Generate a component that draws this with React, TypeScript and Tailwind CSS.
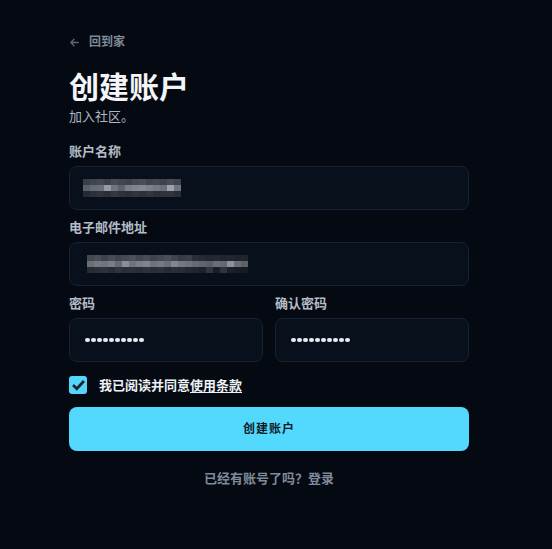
import React from "react";

const nameTop = [0x3a, 0x40, 0x44, 0x3c, 0x48, 0x42, 0x3e, 0x46, 0x4a, 0x40, 0x44, 0x3e, 0x48, 0x40];
const nameMid = [0x5a, 0x66, 0x6a, 0x96, 0x70, 0x5e, 0x7a, 0x80, 0x84, 0x7c, 0x74, 0x6c, 0x9e, 0x70];
const nameBot = [0x26, 0x2c, 0x30, 0x2a, 0x34, 0x2e, 0x2a, 0x30, 0x2c, 0x32, 0x2a, 0x2e, 0x30, 0x2a];

const mailTop = [0x44, 0x4a, 0x3e, 0x48, 0x40, 0x46, 0x4c, 0x42, 0x48, 0x3e, 0x44, 0x4a, 0x40, 0x36, 0x3a, 0x2a, 0x26, 0x22, 0x24, 0x20, 0x22, 0x1e, 0x20];
const mailMid = [0x6a, 0x74, 0x70, 0x7a, 0x66, 0x8a, 0x70, 0x7a, 0x80, 0x6e, 0x76, 0x6a, 0x82, 0x74, 0x6e, 0x66, 0x60, 0x5a, 0x6a, 0x64, 0x8e, 0x6a, 0x5c];
const mailBot = [0x26, 0x2a, 0x2e, 0x28, 0x30, 0x2a, 0x2c, 0x28, 0x2e, 0x2a, 0x2c, 0x26, 0x2a, 0x28, 0x24, 0x20, 0x1c, 0x30, 0x1a, 0x30, 0x1c, 0x18, 0x16];

const hex = (v: number) => {
  const b = Math.min(255, v + 12);
  const h = (n: number) => n.toString(16).padStart(2, "0");
  return `#${h(v)}${h(v + 4)}${h(b)}`;
};

function Mosaic({ rows, block = 7 }: { rows: number[][]; block?: number }) {
  const w = rows[0].length * block;
  const h = rows.length * 6;
  return (
    <svg width={w} height={h} viewBox={`0 0 ${w} ${h}`} className="block">
      {rows.map((row, r) =>
        row.map((v, c) => (
          <rect key={`${r}-${c}`} x={c * block} y={r * 6} width={block} height={6} fill={hex(v)} />
        ))
      )}
    </svg>
  );
}

function Label({ children }: { children: React.ReactNode }) {
  return <div className="text-[13px] font-bold leading-[18px] text-[#b4bcc8]">{children}</div>;
}

function Field({ children, className = "" }: { children?: React.ReactNode; className?: string }) {
  return (
    <div className={`flex h-[44px] items-center rounded-lg border border-[#172234] bg-[#08101b] ${className}`}>
      {children}
    </div>
  );
}

function Dots() {
  return (
    <div className="flex gap-[1.5px]">
      {Array.from({ length: 10 }).map((_, i) => (
        <span key={i} className="block h-[4.5px] w-[4.5px] rounded-full bg-[#e6e9ee]" />
      ))}
    </div>
  );
}

export default function App() {
  return (
    <div
      className="min-h-[549px] w-full bg-[#050a12] text-white"
      style={{ fontFamily: '"Inter", "Noto Sans CJK SC", sans-serif' }}
    >
      <div className="w-[400px] pl-[69px] pt-[33px] box-content">
        <div className="flex items-center gap-[9px] text-[12px] font-bold leading-[18px] text-[#7f8a9a]">
          <svg width="11" height="11" viewBox="0 0 12 12" fill="none" stroke="#5d6878" strokeWidth="1.4" strokeLinecap="round" strokeLinejoin="round">
            <path d="M10 6H2M5.5 2.5 2 6l3.5 3.5" />
          </svg>
          <span>回到家</span>
        </div>

        <h1 className="mt-[18px] text-[30px] font-bold leading-[36px] text-[#f3f5f8]">创建账户</h1>
        <p className="mt-[2px] text-[13px] leading-[18px] text-[#aeb6c2]">加入社区。</p>

        <div className="mt-[17px]">
          <Label>账户名称</Label>
          <Field className="mt-[6px] pl-[13px]">
            <Mosaic rows={[nameTop, nameMid, nameBot]} />
          </Field>
        </div>

        <div className="mt-[8px]">
          <Label>电子邮件地址</Label>
          <Field className="mt-[6px] pl-[17px]">
            <Mosaic rows={[mailTop, mailMid, mailBot]} />
          </Field>
        </div>

        <div className="mt-[8px] grid grid-cols-2 gap-[12px]">
          <div>
            <Label>密码</Label>
            <Field className="mt-[6px] pl-[15px]">
              <Dots />
            </Field>
          </div>
          <div>
            <Label>确认密码</Label>
            <Field className="mt-[6px] pl-[15px]">
              <Dots />
            </Field>
          </div>
        </div>

        <div className="mt-[14px] flex items-center gap-[12px]">
          <div className="flex h-[18px] w-[18px] items-center justify-center rounded-[3px] bg-[#53d6f8]">
            <svg width="13" height="11" viewBox="0 0 13 11" fill="none" stroke="#1c2530" strokeWidth="2.8" strokeLinecap="square">
              <path d="M2 6l2.8 2.8L11 2" />
            </svg>
          </div>
          <span className="text-[13px] font-bold leading-[18px] text-[#eef1f5]">
            我已阅读并同意<span className="underline underline-offset-2">使用条款</span>
          </span>
        </div>

        <button className="mt-[13px] flex h-[44px] w-full items-center justify-center rounded-lg bg-[#53d8fe] text-[12px] font-bold tracking-[1px] text-[#0d1a24]">
          创建账户
        </button>

        <p className="mt-[18px] text-center text-[13px] font-bold leading-[18px] text-[#7f8a9a]">
          已经有账号了吗？登录
        </p>
      </div>
    </div>
  );
}
